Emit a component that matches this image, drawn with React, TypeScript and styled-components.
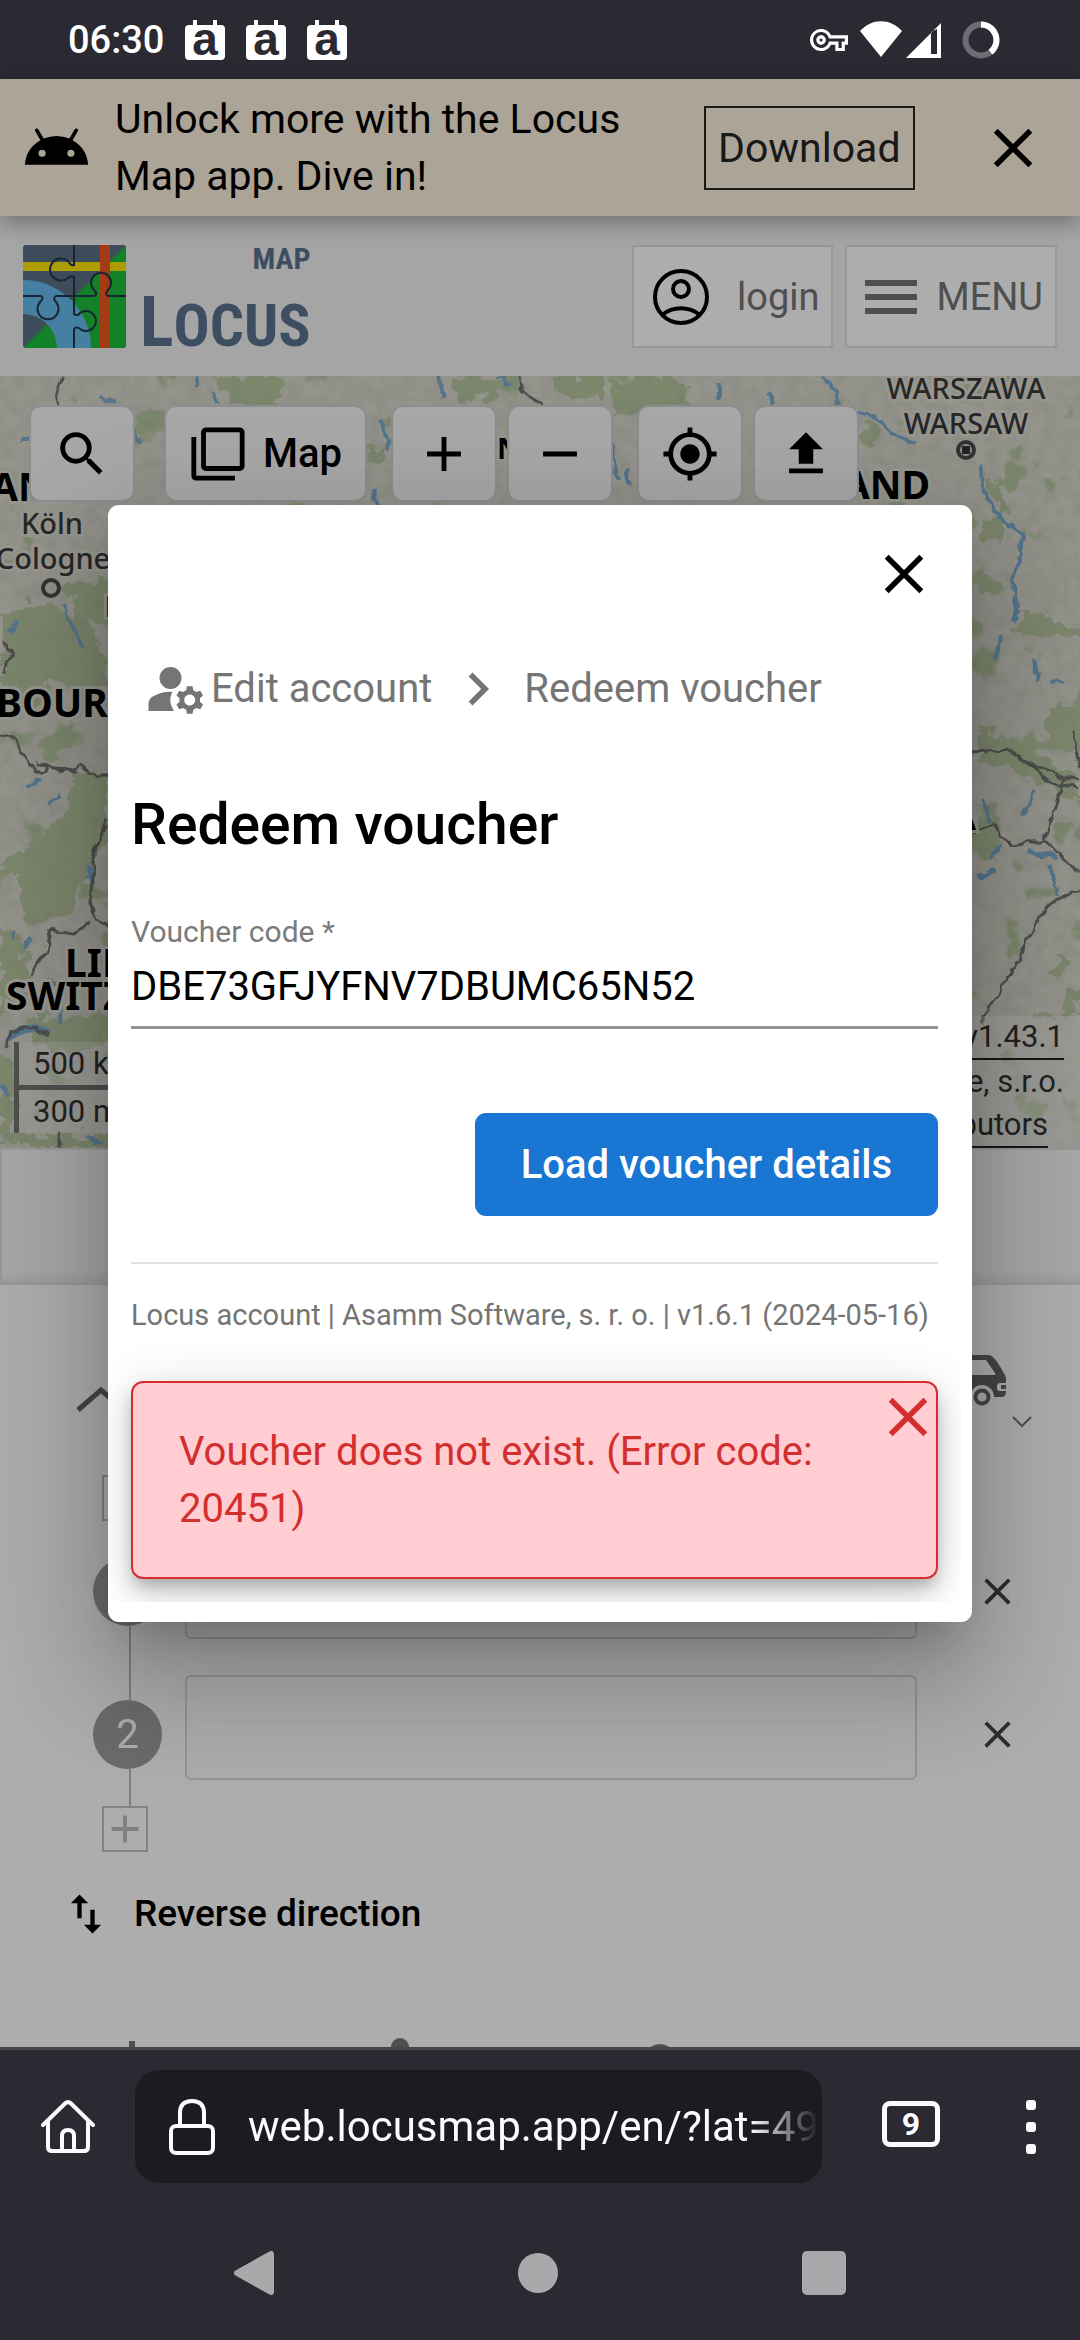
import React from "react";
import styled, { createGlobalStyle } from "styled-components";
import {
  MdAdd,
  MdAndroid,
  MdChevronRight,
  MdClose,
  MdFilterNone,
  MdImportExport,
  MdManageAccounts,
  MdMyLocation,
  MdOutlineVpnKey,
  MdRemove,
  MdSearch,
  MdUpload,
} from "react-icons/md";

const GlobalStyle = createGlobalStyle`
  * { box-sizing: border-box; }
  body { margin: 0; background: #2b2a33; }
  body, button, input { font-family: Roboto, "Noto Sans", sans-serif; }
  button { cursor: pointer; }
  svg { display: block; flex: none; }
`;

const Screen = styled.div`
  display: flex;
  flex-direction: column;
  min-height: 100vh;
`;

const IconButton = styled.button<{ $color?: string }>`
  display: flex;
  align-items: center;
  justify-content: center;
  flex: none;
  padding: 0;
  border: 0;
  background: none;
  color: ${(p) => p.$color ?? "#000"};
`;

/* ---------- status bar ---------- */

const StatusBar = styled.header`
  display: flex;
  align-items: center;
  justify-content: space-between;
  height: 79px;
  padding: 0 80px 0 68px;
  color: #fff;
`;

const StatusGroup = styled.div<{ $gap: number }>`
  display: flex;
  align-items: center;
  gap: ${(p) => p.$gap}px;
`;

const Clock = styled.time`
  font-size: 38px;
  font-weight: 500;
  line-height: 48px;
`;

const CalendarGlyph = styled.svg`
  overflow: visible;
`;

const CalendarIcon = () => (
  <CalendarGlyph width="40" height="42" viewBox="0 0 40 42" aria-hidden="true">
    <path d="M8 1h4v6H8zM28 1h4v6h-4z" fill="#fff" />
    <rect x="0" y="6" width="40" height="35" rx="4" fill="#fff" />
    <text x="20" y="36" textAnchor="middle" fontFamily="Liberation Sans, sans-serif" fontWeight="700" fontSize="46" fill="#2b2a33">a</text>
  </CalendarGlyph>
);

const SignalIcons = () => (
  <svg width="90" height="42" viewBox="0 0 90 42" aria-hidden="true">
    <path d="M0 12C12-1 30-1 42 12L21 38z" fill="#fff" />
    <path d="M46 39L81 4v35zM71 13v22h6V10z" fill="#fff" fillRule="evenodd" />
  </svg>
);

const RingIcon = () => (
  <svg width="38" height="38" viewBox="0 0 38 38" fill="none" strokeWidth="6" aria-hidden="true">
    <circle cx="19" cy="19" r="15.5" stroke="#6d6c74" />
    <path d="M19 3.5A15.5 15.5 0 0 1 28.500 31.200" stroke="#fff" />
  </svg>
);

/* ---------- page ---------- */

const Page = styled.main`
  position: relative;
  display: flex;
  flex-direction: column;
  flex: 1;
  background: #fff;
`;

const Banner = styled.section`
  position: relative;
  z-index: 1;
  display: flex;
  align-items: center;
  height: 137px;
  padding: 0 34px 0 22px;
  gap: 24px;
  background: #fef2dd;
  box-shadow: 0 6px 22px rgba(0, 0, 0, 0.35);
`;

const BannerText = styled.p`
  flex: 1;
  max-width: 565px;
  margin: 0;
  font-size: 41px;
  line-height: 57px;
`;

const DownloadLink = styled.a`
  flex: none;
  padding: 12px;
  border: 2px solid #262626;
  color: #262626;
  font-size: 41px;
  line-height: 56px;
  text-decoration: none;
`;

const BannerClose = styled(IconButton)`
  margin-left: auto;
`;

const SiteHeader = styled.div`
  display: flex;
  align-items: center;
  justify-content: space-between;
  height: 160px;
  padding: 1px 23px 0;
  background: #f4f4f4;
`;

const Brand = styled.a`
  display: flex;
  align-items: stretch;
  gap: 14px;
  height: 103px;
  color: #5c7390;
  text-decoration: none;
`;

const Wordmark = styled.span`
  display: flex;
  flex-direction: column;
  justify-content: space-between;
  font-family: "Liberation Sans Narrow", "Roboto Condensed", Roboto, sans-serif;
  font-weight: 700;
`;

const WordmarkSmall = styled.span`
  align-self: flex-end;
  font-size: 30px;
  line-height: 28px;
`;

const WordmarkLarge = styled.span`
  font-size: 60px;
  line-height: 44px;

  &::first-letter {
    font-size: 70px;
  }
`;

const HeaderActions = styled.nav`
  display: flex;
  gap: 12px;
`;

const HeaderButton = styled.button<{ $gap: number }>`
  display: flex;
  align-items: center;
  gap: ${(p) => p.$gap}px;
  height: 103px;
  padding: 0 12px 0 18px;
  border: 2px solid #e0e0e0;
  background: #fff;
  color: #757575;
  font-size: 38px;
`;

const LocusLogo = () => (
  <svg width="103" height="103" viewBox="0 0 103 103" aria-hidden="true">
    <clipPath id="logo-edge"><rect width="103" height="103" rx="3" /></clipPath>
    <g clipPath="url(#logo-edge)">
      <rect width="103" height="103" fill="#5b7087" />
      <path d="M103 0v103H0z" fill="#1dbf3b" />
      <path d="M0 35a68 68 0 0 1 68 68H34A34 34 0 0 0 0 69z" fill="#66bdef" />
      <rect y="17" width="103" height="9" fill="#ffe600" />
      <rect x="77" width="10" height="103" fill="#f4581e" />
      <path
        d="M51 0v20c-3 1-4-1-6-4a11 11 0 1 0 0 17c2-2 4-2 6-1v37c2 2 5 1 6-1a10 10 0 1 1 0 16c-2-2-5-2-6 0v22M0 51h18c3 2 1 4-1 6a10.500 10.500 0 1 0 16 0c-2-2-3-4 0-6h38c3-1 3-3 0-6a10 10 0 1 1 14 0c-3 3-2 5 0 6h18"
        fill="none"
        stroke="#22384a"
        strokeWidth="2"
      />
    </g>
  </svg>
);

const AccountIcon = () => (
  <svg width="58" height="58" viewBox="0 0 58 58" fill="none" stroke="#000" strokeWidth="4" aria-hidden="true">
    <circle cx="29" cy="29" r="26" />
    <circle cx="29" cy="21" r="8" />
    <path d="M10 47c11-9 27-9 38 0" />
  </svg>
);

const MenuIcon = () => (
  <svg width="52" height="36" viewBox="0 0 52 36" fill="#757575" aria-hidden="true">
    <path d="M0 1h52v6H0zM0 15h52v6H0zM0 29h52v6H0z" />
  </svg>
);

/* ---------- map ---------- */

const MapArea = styled.section`
  position: relative;
  display: flex;
  flex-direction: column;
  justify-content: space-between;
  height: 772px;
  overflow: hidden;
`;

const MapCanvas = styled.svg`
  position: absolute;
  inset: 0;
  width: 100%;
  height: 100%;
`;

const MapToolbar = styled.div`
  position: relative;
  display: flex;
  padding: 29px;
  gap: 24px;
`;

const ToolPair = styled.div`
  display: flex;
  gap: 10px;
`;

const ToolButton = styled.button<{ $wide?: boolean }>`
  display: flex;
  align-items: center;
  justify-content: center;
  gap: 16px;
  width: ${(p) => (p.$wide ? 203 : 106)}px;
  height: 97px;
  margin-left: ${(p) => (p.$wide ? 5 : 0)}px;
  padding: 0;
  border: 2px solid #d2d2d4;
  border-radius: 12px;
  background: #f8f8f8;
  color: #000;
  font-size: 40px;
  font-weight: 500;
`;

const MapFooter = styled.div`
  position: relative;
  display: flex;
  align-items: flex-end;
  justify-content: space-between;
`;

const ScaleBars = styled.div`
  margin: 0 0 15px 14px;
  border-left: 5px solid #757575;
  background: rgba(255, 255, 255, 0.3);
  color: #333;
  font-size: 31px;
  line-height: 43px;
`;

const ScaleBar = styled.div<{ $length: number }>`
  width: ${(p) => p.$length}px;
  padding: 0 14px;

  & + & {
    border-top: 5px solid #757575;
  }
`;

const Attribution = styled.div`
  display: flex;
  flex-direction: column;
  align-items: flex-end;
  padding: 0 16px 0 24px;
  background: rgba(255, 255, 255, 0.3);
  color: #333;
  font-size: 31px;
  line-height: 44px;
`;

const AttributionLink = styled.a<{ $inset?: number }>`
  margin-right: ${(p) => p.$inset ?? 0}px;
  border-bottom: 2px solid #222;
  color: inherit;
  line-height: 42px;
  text-decoration: none;
`;

const haloText = { stroke: "#deddd3", strokeWidth: 6, paintOrder: "stroke" } as const;

const MapDrawing = () => (
  <MapCanvas viewBox="0 376 1080 772" preserveAspectRatio="xMidYMid slice" aria-hidden="true">
    <defs>
      <filter id="rough" x="-5%" y="-5%" width="110%" height="110%">
        <feTurbulence type="fractalNoise" baseFrequency="0.06" numOctaves="3" seed="4" result="n" />
        <feDisplacementMap in="SourceGraphic" in2="n" scale="26" xChannelSelector="R" yChannelSelector="G" />
      </filter>
      <filter id="edge" x="-5%" y="-5%" width="110%" height="110%">
        <feTurbulence type="fractalNoise" baseFrequency="0.09" numOctaves="2" seed="9" result="n" />
        <feDisplacementMap in="SourceGraphic" in2="n" scale="9" xChannelSelector="R" yChannelSelector="G" />
      </filter>
      <filter id="woods" x="0" y="0" width="100%" height="100%">
        <feTurbulence type="fractalNoise" baseFrequency="0.022" numOctaves="4" seed="12" />
        <feColorMatrix values="0 0 0 0 0.47  0 0 0 0 0.58  0 0 0 0 0.35  14 0 0 0 -9.100" />
      </filter>
      <filter id="relief" x="0" y="0" width="100%" height="100%">
        <feTurbulence type="fractalNoise" baseFrequency="0.07" numOctaves="3" seed="3" />
        <feColorMatrix values="0 0 0 0 0.35  0 0 0 0 0.35  0 0 0 0 0.3  0.4 0 0 0 -0.150" />
      </filter>
    </defs>
    <rect y="376" width="1080" height="772" fill="#dad9ce" />
    <rect y="376" width="1080" height="772" filter="url(#woods)" />
    <g fill="#b8c8a0" filter="url(#rough)">
      <path d="M208 376h80l-8 22-22 14-28-6-6-18z" />
      <path d="M452 376h62l-14 22-38 4zM554 376h54l-8 22-42-4zM612 380l66-4 14 30-30 4-52 4z" />
      <path d="M360 448h28v12h-26zM330 470h20v24h-18zM88 430h14v12H88z" />
      <path d="M66 582h44v38H76zM0 612l38-12 50 24 24 60-30 14-30-24-18 36-34-6z" />
      <path d="M78 772h34v60l-28 40-14 44-46 4-4-40-20-14 40-30 24-24z" />
      <path d="M0 920l22 18 8 60-30 20zM30 1018h78v26l-40 10-34-8zM0 1060h14v84H0zM14 1134h94v14H14z" />
      <path d="M862 420l20 8-6 16-16-6zM982 468l18 12 8 30-12-8zM980 520h22v22h-20zM976 574l22 4 8 18-30-4z" />
      <path d="M1026 610l54 16v14l-62-4zM1050 706l30 8v46l-34-20zM976 730l40 10 34 24 30 12v30l-40-26-60-20z" />
      <path d="M980 812l22 6-8 42-18-6zM1052 960h14v14h-14zM1064 990h16v28h-18zM1034 1010h20v10h-20z" />
    </g>
    <g fill="none" stroke="#79acd2" strokeWidth="4" filter="url(#edge)">
      <path d="M822 376l14 16 4 18 34 6 22 20 20 8M980 464l4 28 16 26 22 16-2 28-8 18 6 40" />
      <path d="M64 606l12 26 8 16M196 376v12M214 392l4 10M380 420l8 26 6-10M438 376l6 22M500 376l10 8M720 384v14M768 392l6 16" />
      <path d="M20 440h10M136 430l4 14M100 396l14 6M374 490l2 18M610 440l8 40M626 466l4 20" />
      <path d="M994 660l8-24M1034 660l4 22M1050 680l14 4M1014 622l6-12M984 800l6 24M1036 790l-14 24M1026 852l30 4M1050 864l8 32M978 878l20-8M1000 846l-8 12" />
      <path d="M28 786l14-6M14 930v10M24 948l8-10M46 980l14 4M60 1008v16M16 620l-6 12M0 1086l10 10M86 1138l18 6M60 796l-12 8M88 866l4 20" />
    </g>
    <path d="M8 1040c6-14 26-18 42-8-14-4-30-2-42 8z" fill="#79acd2" stroke="#79acd2" strokeWidth="4" />
    <g fill="none" stroke="#6f6f70" strokeWidth="3" filter="url(#edge)">
      <path d="M62 376l-4 12v18M518 376l2 12 22 18M0 737l14 2 12 20 14 14 8-6 30 4" />
      <path d="M36 762l24 10 20-6 18 10 12 0M108 820l-14 34-4 50 6 16 12 4M90 922l-16 12-26-4 2 16-20 30M6 1048l4-16 26-6 12 10" />
      <path d="M972 752l36-2 22 14 18 18 30 6M1072 730l8 40M1024 760l40 18 16 2M1064 778l-20 62-32 6-20-20-18 6M1044 840l20 18 16 16" />
      <path d="M1080 892l-30 10-20 36-30 54-20 30M0 640l14 12-12 20M60 1130v18" />
    </g>
    <rect y="376" width="1080" height="772" filter="url(#relief)" />
    <g fill="#3a3a3a" fontFamily="Noto Sans, sans-serif" fontSize="29" fontWeight="500" textAnchor="middle">
      <text x="966" y="399" {...haloText}>WARSZAWA</text>
      <text x="966" y="434" {...haloText}>WARSAW</text>
      <text x="52" y="534" {...haloText}>Köln</text>
      <text x="53" y="569" {...haloText}>Cologne</text>
      <text x="112" y="617" {...haloText}>F</text>
    </g>
    <g fill="none" stroke="#4a4a4a" strokeWidth="4">
      <circle cx="966" cy="450" r="8" />
      <circle cx="51" cy="588" r="8" />
    </g>
    <rect x="962" y="446" width="8" height="8" fill="#333" />
    <g fill="#000" fontFamily="Noto Sans, sans-serif" fontSize="39" fontWeight="700">
      <text x="930" y="499" textAnchor="end" {...haloText}>POLAND</text>
      <text x="-9" y="501" {...haloText}>AND</text>
      <text x="-4" y="717" {...haloText}>BOURG</text>
      <text x="3" y="647" textAnchor="end" {...haloText}>M</text>
      <text x="65" y="977" {...haloText}>LIECH</text>
      <text x="6" y="1010" {...haloText}>SWITZERLAND</text>
      <text x="976" y="830" textAnchor="end" {...haloText}>SLOVAKIA</text>
      <text x="497" y="459" fontSize="29" {...haloText}>N</text>
    </g>
  </MapCanvas>
);

/* ---------- planner sheet ---------- */

const ElevationPanel = styled.div`
  height: 137px;
  border-top: 2px solid #e0e0e0;
  border-left: 2px solid #e0e0e0;
  background: linear-gradient(#f6f6f6 90%, #e2e2e2);
`;

const Planner = styled.section`
  display: flex;
  flex-direction: column;
  flex: 1;
  padding-top: 69px;
  background: #fff;
`;

const PlannerHead = styled.div`
  display: flex;
  align-items: flex-start;
  height: 75px;
  margin-bottom: 46px;
  padding: 0 48px 0 76px;
  gap: 6px;
`;

const CollapseIcon = styled.svg`
  align-self: center;
  margin-top: 14px;
`;

const Spacer = styled.div`
  flex: 1;
`;

const Stops = styled.div`
  display: flex;
  padding: 0 60px 0 93px;
`;

const Rail = styled.div`
  width: 69px;
`;

const AddStop = styled.button`
  display: flex;
  align-items: center;
  justify-content: center;
  width: 46px;
  height: 46px;
  margin-left: 9px;
  padding: 0;
  border: 2px solid #c0c0c0;
  background: #fff;
  color: #bdbdbd;
`;

const Connector = styled.div<{ $length: number }>`
  width: 2px;
  height: ${(p) => p.$length}px;
  margin-left: 36px;
  background: #bbb;
`;

const StopMarker = styled.div`
  width: 69px;
  height: 69px;
  border-radius: 50%;
  background: #9e9e9e;
  color: #fff;
  font-size: 40px;
  line-height: 69px;
  text-align: center;
`;

const StopFields = styled.div`
  display: flex;
  flex-direction: column;
  flex: 1;
  gap: 36px;
  padding: 59px 58px 0 23px;
`;

const StopRemovals = styled.div`
  display: flex;
  flex-direction: column;
  gap: 74px;
  padding-top: 82px;

  button {
    height: 69px;
  }
`;

const StopInput = styled.input`
  width: 100%;
  height: 105px;
  padding: 0 24px;
  border: 2px solid #dadada;
  border-radius: 6px;
  background: #fff;
  font-size: 40px;
`;

const ReverseButton = styled.button`
  display: flex;
  align-items: center;
  align-self: flex-start;
  gap: 22px;
  margin-top: 36px;
  padding: 0 60px;
  border: 0;
  background: none;
  color: #000;
  font-size: 37px;
  font-weight: 500;
  line-height: 52px;
`;

const ModeStrip = styled.div`
  height: 9px;
  margin-top: auto;
  overflow: hidden;
`;

const ModeIcons = () => (
  <svg width="1080" height="40" viewBox="0 0 1080 40" fill="#757575" aria-hidden="true">
    <rect x="129" y="3" width="6" height="30" />
    <circle cx="400" cy="9" r="9" />
    <circle cx="660" cy="22" r="16" />
  </svg>
);

const CarIcon = () => (
  <svg width="84" height="56" viewBox="0 0 84 56" fill="#666" aria-hidden="true">
    <path d="M12 1h54c6 0 10 8 17 20q1 2 1 6v11c0 3-2 5-4 5h-8a12 12 0 0 0-24 0H32a12 12 0 0 0-24 0H0V26zM40 6v15h33q1-1 0-2L64 6zM78 29q-3 0-3 3v2q0 3 3 3h6v-2h-5v-4h5v-2z" fillRule="evenodd" />
    <circle cx="20" cy="43" r="6.500" fill="none" stroke="#666" strokeWidth="4" />
    <circle cx="60" cy="43" r="6.500" fill="none" stroke="#666" strokeWidth="4" />
  </svg>
);

/* ---------- dialog ---------- */

const Backdrop = styled.div`
  position: absolute;
  inset: 0;
  z-index: 2;
  display: flex;
  align-items: center;
  justify-content: center;
  overflow: hidden;
  background: rgba(0, 0, 0, 0.32);
`;

const Dialog = styled.div`
  width: 80%;
  padding: 0 11px 20px 0;
  border-radius: 11px;
  background: #fff;
  box-shadow: 0 30px 42px -19px rgba(0, 0, 0, 0.2), 0 66px 104px 8px rgba(0, 0, 0, 0.14),
    0 25px 126px 22px rgba(0, 0, 0, 0.12);
`;

const DialogTop = styled.div`
  display: flex;
  justify-content: flex-end;
  padding: 36px 24px 35px;
`;

const DialogBody = styled.div`
  display: flex;
  flex-direction: column;
  overflow: hidden;
  padding: 0 23px 23px;
`;

const Breadcrumb = styled.nav`
  display: flex;
  align-items: center;
  gap: 13px;
  padding: 14px 12px;
  color: #757575;
  font-size: 40px;
`;

const Crumb = styled.a`
  display: flex;
  align-items: center;
  gap: 2px;
  color: inherit;
  text-decoration: none;
`;

const Title = styled.h1`
  margin: 53px 0 51px;
  font-size: 57px;
  font-weight: 500;
  line-height: 72px;
`;

const FieldLabel = styled.label`
  color: #7b7b7b;
  font-size: 30px;
  line-height: 40px;
`;

const VoucherInput = styled.input`
  height: 77px;
  padding: 0 0 4px;
  border: 0;
  border-bottom: 3px solid #949494;
  border-radius: 0;
  outline: 0;
  color: #000;
  font-size: 40px;
`;

const SubmitButton = styled.button`
  align-self: flex-end;
  height: 103px;
  margin: 84px 0 46px;
  padding: 0 46px;
  border: 0;
  border-radius: 11px;
  background: #1976d2;
  color: #fff;
  font-size: 40px;
  font-weight: 500;
`;

const DialogFooter = styled.footer`
  padding: 31px 0 46px;
  border-top: 2px solid #e0e0e0;
  color: #757575;
  font-size: 29px;
  line-height: 40px;
`;

const Alert = styled.div`
  position: relative;
  padding: 40px 90px 40px 46px;
  border: 2px solid #d32f2f;
  border-radius: 12px;
  background: #ffcdd2;
  box-shadow: 0 8px 14px -3px rgba(0, 0, 0, 0.2), 0 16px 28px rgba(0, 0, 0, 0.14), 0 3px 50px rgba(0, 0, 0, 0.12);
  color: #d32f2f;
  font-size: 40px;
  line-height: 57px;
`;

const AlertClose = styled(IconButton)`
  position: absolute;
  top: 1px;
  right: -5px;
`;

/* ---------- browser chrome ---------- */

const BrowserBar = styled.div`
  display: flex;
  align-items: center;
  height: 156px;
  padding: 0 44px 0 39px;
  border-top: 3px solid #45464b;
  background: #2b2a33;
  color: #fbfbfe;
`;

const AddressBox = styled.div`
  display: flex;
  align-items: center;
  flex: 1;
  height: 113px;
  margin: 0 60px 0 38px;
  padding: 0 3px 0 31px;
  gap: 30px;
  border-radius: 24px;
  background: #1c1b22;
`;

const AddressInput = styled.input`
  flex: 1;
  min-width: 0;
  height: 60px;
  padding: 0;
  border: 0;
  outline: 0;
  background: none;
  color: #fbfbfe;
  font-size: 42px;
  mask-image: linear-gradient(to right, #000 88%, transparent);
`;

const TabsButton = styled.button`
  width: 58px;
  height: 46px;
  margin: 0 86px 6px 0;
  padding: 0;
  border: 5px solid #fbfbfe;
  border-radius: 8px;
  background: none;
  color: #fbfbfe;
  font-size: 32px;
  font-weight: 700;
  line-height: 36px;
`;

const HomeIcon = () => (
  <svg width="58" height="58" viewBox="0 0 58 58" fill="none" stroke="#fbfbfe" strokeWidth="4" strokeLinecap="round" strokeLinejoin="round" aria-hidden="true">
    <path d="M4 27L26 5.500c2-2 4-2 6 0L54 27" />
    <path d="M9 24v25q0 4 4 4h32q4 0 4-4V24" />
    <path d="M23 53V38q0-6 6-6t6 6v15" />
  </svg>
);

const LockIcon = () => (
  <svg width="52" height="60" viewBox="0 0 52 60" fill="none" stroke="#fbfbfe" strokeWidth="4" aria-hidden="true">
    <rect x="5" y="29" width="42" height="27" rx="5" />
    <path d="M14 29V16q0-12 12-12t12 12v13" />
  </svg>
);

const DotsIcon = () => (
  <svg width="10" height="54" viewBox="0 0 10 54" fill="#fbfbfe" aria-hidden="true">
    <rect width="10" height="10" rx="3" />
    <rect y="22" width="10" height="10" rx="3" />
    <rect y="44" width="10" height="10" rx="3" />
  </svg>
);

const SystemNav = styled.nav`
  display: flex;
  align-items: center;
  justify-content: space-between;
  height: 137px;
  padding: 2px 234px 0;
`;

const App = () => (
  <Screen>
    <GlobalStyle />
    <StatusBar>
      <StatusGroup $gap={21}>
        <Clock>06:30</Clock>
        <CalendarIcon />
        <CalendarIcon />
        <CalendarIcon />
      </StatusGroup>
      <StatusGroup $gap={12}>
        <MdOutlineVpnKey size={38} />
        <SignalIcons />
        <RingIcon />
      </StatusGroup>
    </StatusBar>

    <Page>
      <Banner>
        <MdAndroid size={69} />
        <BannerText>Unlock more with the Locus Map app. Dive in!</BannerText>
        <DownloadLink href="#download">Download</DownloadLink>
        <BannerClose aria-label="Close banner">
          <MdClose size={66} />
        </BannerClose>
      </Banner>

      <SiteHeader>
        <Brand href="#home" aria-label="Locus Map">
          <LocusLogo />
          <Wordmark>
            <WordmarkSmall>MAP</WordmarkSmall>
            <WordmarkLarge>LOCUS</WordmarkLarge>
          </Wordmark>
        </Brand>
        <HeaderActions>
          <HeaderButton $gap={27}>
            <AccountIcon />
            login
          </HeaderButton>
          <HeaderButton $gap={19}>
            <MenuIcon />
            MENU
          </HeaderButton>
        </HeaderActions>
      </SiteHeader>

      <MapArea>
        <MapDrawing />
        <MapToolbar>
          <ToolButton aria-label="Search">
            <MdSearch size={58} />
          </ToolButton>
          <ToolButton $wide>
            <MdFilterNone size={58} />
            Map
          </ToolButton>
          <ToolPair>
            <ToolButton aria-label="Zoom in">
              <MdAdd size={58} />
            </ToolButton>
            <ToolButton aria-label="Zoom out">
              <MdRemove size={58} />
            </ToolButton>
          </ToolPair>
          <ToolPair>
            <ToolButton aria-label="My location">
              <MdMyLocation size={58} />
            </ToolButton>
            <ToolButton aria-label="Import">
              <MdUpload size={58} />
            </ToolButton>
          </ToolPair>
        </MapToolbar>
        <MapFooter>
          <ScaleBars>
            <ScaleBar $length={250}>500 km</ScaleBar>
            <ScaleBar $length={240}>300 mi</ScaleBar>
          </ScaleBars>
          <Attribution>
            <AttributionLink href="#version">v1.43.1</AttributionLink>
            <span>© Asamm Software, s.r.o.</span>
            <AttributionLink href="#osm" $inset={16}>
              © OSM contributors
            </AttributionLink>
          </Attribution>
        </MapFooter>
      </MapArea>

      <ElevationPanel />

      <Planner>
        <PlannerHead>
          <CollapseIcon width="50" height="30" viewBox="0 0 50 30" fill="none" stroke="#666" strokeWidth="5" aria-hidden="true">
            <path d="M2 26L25 6l23 20" />
          </CollapseIcon>
          <Spacer />
          <CarIcon />
          <svg width="20" height="75" viewBox="0 0 20 75" fill="none" stroke="#757575" strokeWidth="2" aria-hidden="true">
            <path d="M1 63l9 9 9-9" />
          </svg>
        </PlannerHead>
        <Stops>
          <Rail>
            <AddStop aria-label="Add stop at start">
              <MdAdd size={46} />
            </AddStop>
            <Connector $length={36} />
            <StopMarker>1</StopMarker>
            <Connector $length={74} />
            <StopMarker>2</StopMarker>
            <Connector $length={37} />
            <AddStop aria-label="Add stop at end">
              <MdAdd size={46} />
            </AddStop>
          </Rail>
          <StopFields>
            <StopInput aria-label="Stop 1" />
            <StopInput aria-label="Stop 2" />
          </StopFields>
          <StopRemovals>
            <IconButton $color="#444" aria-label="Remove stop 1">
              <MdClose size={45} />
            </IconButton>
            <IconButton $color="#444" aria-label="Remove stop 2">
              <MdClose size={45} />
            </IconButton>
          </StopRemovals>
        </Stops>
        <ReverseButton>
          <MdImportExport size={52} />
          Reverse direction
        </ReverseButton>
        <ModeStrip>
          <ModeIcons />
        </ModeStrip>
      </Planner>

      <Backdrop>
        <Dialog role="dialog" aria-modal="true" aria-labelledby="dialog-title">
          <DialogTop>
            <IconButton aria-label="Close">
              <MdClose size={66} />
            </IconButton>
          </DialogTop>
          <DialogBody>
            <Breadcrumb>
              <Crumb href="#account">
                <MdManageAccounts size={66} />
                Edit account
              </Crumb>
              <MdChevronRight size={66} />
              <Crumb href="#voucher">Redeem voucher</Crumb>
            </Breadcrumb>
            <Title id="dialog-title">Redeem voucher</Title>
            <FieldLabel htmlFor="voucher">Voucher code *</FieldLabel>
            <VoucherInput id="voucher" defaultValue="DBE73GFJYFNV7DBUMC65N52" />
            <SubmitButton>Load voucher details</SubmitButton>
            <DialogFooter>Locus account | Asamm Software, s. r. o. | v1.6.1 (2024-05-16)</DialogFooter>
            <Alert role="alert">
              Voucher does not exist. (Error code: 20451)
              <AlertClose $color="#d32f2f" aria-label="Dismiss">
                <MdClose size={66} />
              </AlertClose>
            </Alert>
          </DialogBody>
        </Dialog>
      </Backdrop>
    </Page>

    <BrowserBar>
      <IconButton aria-label="Home">
        <HomeIcon />
      </IconButton>
      <AddressBox>
        <LockIcon />
        <AddressInput aria-label="Address" defaultValue="web.locusmap.app/en/?lat=49" />
      </AddressBox>
      <TabsButton aria-label="Open tabs">9</TabsButton>
      <IconButton aria-label="Browser menu">
        <DotsIcon />
      </IconButton>
    </BrowserBar>
    <SystemNav>
      <IconButton aria-label="Back">
        <svg width="40" height="46" viewBox="0 0 40 46" fill="#a9a9ac" stroke="#a9a9ac" strokeWidth="6" strokeLinejoin="round">
          <path d="M3 23L37 4v38z" />
        </svg>
      </IconButton>
      <IconButton aria-label="Home screen">
        <svg width="40" height="40" viewBox="0 0 40 40" fill="#a9a9ac">
          <circle cx="20" cy="20" r="20" />
        </svg>
      </IconButton>
      <IconButton aria-label="Recent apps">
        <svg width="44" height="44" viewBox="0 0 44 44" fill="#a9a9ac">
          <rect width="44" height="44" rx="5" />
        </svg>
      </IconButton>
    </SystemNav>
  </Screen>
);

export default App;
